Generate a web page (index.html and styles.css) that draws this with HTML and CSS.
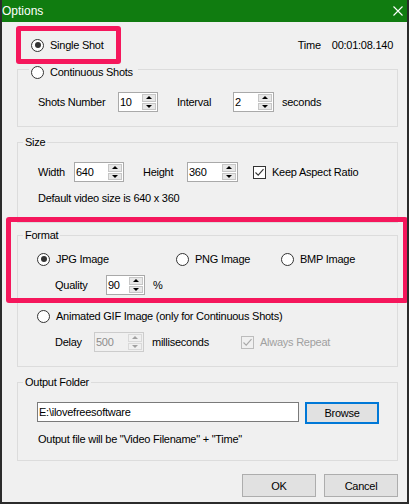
FILE: index.html
```html
<!DOCTYPE html>
<html>
<head>
<meta charset="utf-8">
<link rel="stylesheet" href="styles.css">
</head>
<body>
<div class="window">
  <div class="titlebar">
    <span class="title">Options</span>
    <svg class="close" width="10" height="10" viewBox="0 0 10 10"><path d="M0.5 0.5 L9.5 9.5 M9.5 0.5 L0.5 9.5" stroke="#fff" stroke-width="1.1" fill="none"/></svg>
  </div>
  <div class="body">
    <div class="toprow">
      <div class="opt"><span class="rb on"></span><span>Single Shot</span></div>
      <div class="time"><span>Time</span><span>00:01:08.140</span></div>
    </div>

    <div class="group g-cont">
      <div class="caption cap-radio"><span class="rb"></span><span>Continuous Shots</span></div>
      <div class="row r-cont">
        <span class="lbl w-shots">Shots Number</span>
        <div class="spin w40"><span class="val">10</span><span class="btns"><i class="up"></i><i class="dn"></i></span></div>
        <span class="lbl w-interval">Interval</span>
        <div class="spin w41"><span class="val">2</span><span class="btns"><i class="up"></i><i class="dn"></i></span></div>
        <span class="lbl ml8">seconds</span>
      </div>
    </div>

    <div class="group g-size">
      <div class="caption">Size</div>
      <div class="row r-size">
        <span class="lbl w-width">Width</span>
        <div class="spin w50"><span class="val">640</span><span class="btns"><i class="up"></i><i class="dn"></i></span></div>
        <span class="lbl w-height">Height</span>
        <div class="spin w51"><span class="val">360</span><span class="btns"><i class="up"></i><i class="dn"></i></span></div>
        <div class="chk-opt ml15"><span class="cb"><svg width="11" height="11" viewBox="0 0 11 11"><path d="M1.5 5.5 L4.2 8.2 L9.5 2.2" stroke="#333" stroke-width="1.1" fill="none"/></svg></span><span>Keep Aspect Ratio</span></div>
      </div>
      <div class="note">Default video size is 640 x 360</div>
    </div>

    <div class="group g-format">
      <div class="caption">Format</div>
      <div class="row r-radios">
        <div class="opt w-jpg"><span class="rb on"></span><span>JPG Image</span></div>
        <div class="opt w-png"><span class="rb"></span><span>PNG Image</span></div>
        <div class="opt"><span class="rb"></span><span>BMP Image</span></div>
      </div>
      <div class="row r-quality">
        <span class="lbl w-quality">Quality</span>
        <div class="spin w39"><span class="val">90</span><span class="btns"><i class="up"></i><i class="dn"></i></span></div>
        <span class="lbl ml8">%</span>
      </div>
      <div class="row r-gif">
        <div class="opt"><span class="rb"></span><span>Animated GIF Image (only for Continuous Shots)</span></div>
      </div>
      <div class="row r-delay">
        <span class="lbl w-delay">Delay</span>
        <div class="spin w50 disabled"><span class="val">500</span><span class="btns"><i class="up"></i><i class="dn"></i></span></div>
        <span class="lbl ml8 w-ms">milliseconds</span>
        <div class="chk-opt disabled"><span class="cb"><svg width="11" height="11" viewBox="0 0 11 11"><path d="M1.5 5.5 L4.2 8.2 L9.5 2.2" stroke="#a8a8a8" stroke-width="1.1" fill="none"/></svg></span><span>Always Repeat</span></div>
      </div>
    </div>

    <div class="group g-output">
      <div class="caption">Output Folder</div>
      <div class="row r-out">
        <div class="textbox">E:\ilovefreesoftware</div>
        <div class="btn browse">Browse</div>
      </div>
      <div class="note">Output file will be "Video Filename" + "Time"</div>
    </div>

    <div class="buttons">
      <div class="btn">OK</div>
      <div class="btn">Cancel</div>
    </div>
  </div>

  <div class="hl hl1"></div>
  <div class="hl hl2"></div>
</div>
</body>
</html>
```

FILE: styles.css
```css
* { box-sizing: border-box; }
html, body { margin: 0; padding: 0; }
body {
  background: #fff;
  font-family: "Liberation Sans", Arial, sans-serif;
  font-size: 11px;
  letter-spacing: -0.25px;
  color: #000;
}
.window {
  position: relative;
  width: 409px;
  height: 504px;
  background: #f0f0f0;
  border: 2px solid #2b2b2b;
  border-top: 0;
  display: flex;
  flex-direction: column;
  overflow: hidden;
}
.titlebar {
  height: 22px;
  margin: 0 -2px;
  background: #107c10;
  color: #fff;
  display: flex;
  align-items: center;
  padding-left: 2px;
  font-size: 12px;
  letter-spacing: 0;
}
.close { margin-left: auto; margin-right: 6px; }

.body {
  display: flex;
  flex-direction: column;
  padding: 0 9px 0 15px;
}
.toprow {
  margin-top: 16px;
  height: 14px;
  display: flex;
  align-items: center;
  padding-left: 14px;
}
.time { margin-left: auto; margin-right: 5px; display: flex; gap: 11px; }

.opt, .chk-opt { display: flex; align-items: center; gap: 6px; white-space: nowrap; }
.rb {
  width: 13px; height: 13px;
  border: 1px solid #333;
  border-radius: 50%;
  background: #fff;
  display: flex; align-items: center; justify-content: center;
  flex: none;
}
.rb.on::after {
  content: "";
  width: 6px; height: 6px;
  border-radius: 50%;
  background: #333;
}
.cb {
  width: 13px; height: 13px;
  border: 1px solid #333;
  background: #fff;
  display: flex; align-items: center; justify-content: center;
  flex: none;
}
.chk-opt.disabled { color: #a0a0a0; }
.chk-opt.disabled .cb { border-color: #bcbcbc; background: #f0f0f0; }

.group {
  border: 1px solid #dcdcdc;
  display: flex;
  flex-direction: column;
}
.caption {
  align-self: flex-start;
  height: 14px;
  line-height: 14px;
  margin: -8px 0 0 5px;
  padding: 0 2px;
  background: #f0f0f0;
  display: flex;
  align-items: center;
  gap: 6px;
  white-space: nowrap;
}
.caption.cap-radio { margin: -5px 0 0 11px; padding: 0 5px 0 2px; }

.row { display: flex; align-items: center; white-space: nowrap; }
.lbl { flex: none; }
.ml8 { margin-left: 8px; }
.ml15 { margin-left: 15px; }

.g-cont { margin-top: 17px; padding-bottom: 14px; }
.r-cont { margin-top: 13px; height: 20px; padding-left: 20px; }
.w-shots { width: 80px; }
.w-interval { width: 56px; margin-left: 19px; }

.g-size { margin-top: 15px; padding-bottom: 17px; }
.r-size { margin-top: 13px; height: 20px; padding-left: 20px; }
.w-width { width: 36px; }
.w-height { width: 44px; margin-left: 19px; }
.note { margin-top: 9px; height: 14px; line-height: 14px; padding-left: 20px; white-space: nowrap; }

.g-format { margin-top: 12px; padding-bottom: 14px; }
.r-radios { margin-top: 10px; height: 14px; padding-left: 19px; }
.w-jpg { width: 139px; }
.w-png { width: 105px; }
.r-quality { margin-top: 9px; height: 20px; padding-left: 37px; }
.w-quality { width: 51px; }
.r-gif { margin-top: 14px; height: 14px; padding-left: 19px; }
.r-delay { margin-top: 9px; height: 20px; padding-left: 37px; }
.w-delay { width: 39px; }
.w-ms { width: 89px; }

.g-output { margin-top: 15px; padding-bottom: 14px; }
.g-output .note { margin-top: 8px; }
.r-out { margin-top: 13px; height: 22px; padding-left: 19px; align-items: flex-start; }
.textbox {
  width: 262px; height: 20px;
  border: 1px solid #7a7a7a;
  background: #fff;
  padding-left: 1px;
  line-height: 18px;
}

.spin {
  height: 20px;
  border: 1px solid #a9a9a9;
  background: #fff;
  display: flex;
  flex: none;
}
.w39 { width: 39px; }
.w40 { width: 40px; }
.w41 { width: 41px; }
.w50 { width: 50px; }
.w51 { width: 51px; }
.spin .val { flex: 1; padding-left: 1px; line-height: 18px; }
.spin .btns {
  width: 15px;
  padding: 1px 1px 1px 0;
  display: flex;
  flex-direction: column;
  gap: 1px;
}
.spin .btns i {
  flex: 1;
  background: #e8e8e8;
  border: 1px solid #c6c6c6;
  display: flex; align-items: center; justify-content: center;
}
.spin .btns i::after {
  content: "";
  width: 0; height: 0;
  border-left: 3px solid transparent;
  border-right: 3px solid transparent;
}
.spin .btns i.up::after { border-bottom: 3px solid #000; }
.spin .btns i.dn::after { border-top: 3px solid #000; }
.spin.disabled { border-color: #cccccc; background: #f0f0f0; color: #8d8d8d; }
.spin.disabled .btns i { background: #f0f0f0; border-color: #d9d9d9; }
.spin.disabled .btns i.up::after { border-bottom-color: #a0a0a0; }
.spin.disabled .btns i.dn::after { border-top-color: #a0a0a0; }

.btn {
  height: 23px;
  width: 74px;
  border: 1px solid #adadad;
  background: #e1e1e1;
  display: flex; align-items: center; justify-content: center;
}
.btn.browse {
  height: 22px;
  margin-left: 6px;
  border: 2px solid #0078d7;
}
.buttons {
  margin-top: 13px;
  display: flex;
  justify-content: flex-end;
  gap: 8px;
}

.hl {
  position: absolute;
  border: 5px solid #f5175c;
  border-radius: 3px;
  pointer-events: none;
}
.hl1 { left: 14px; top: 26px; width: 105px; height: 38px; }
.hl2 { left: 4px; top: 217px; width: 402px; height: 86px; }
```
